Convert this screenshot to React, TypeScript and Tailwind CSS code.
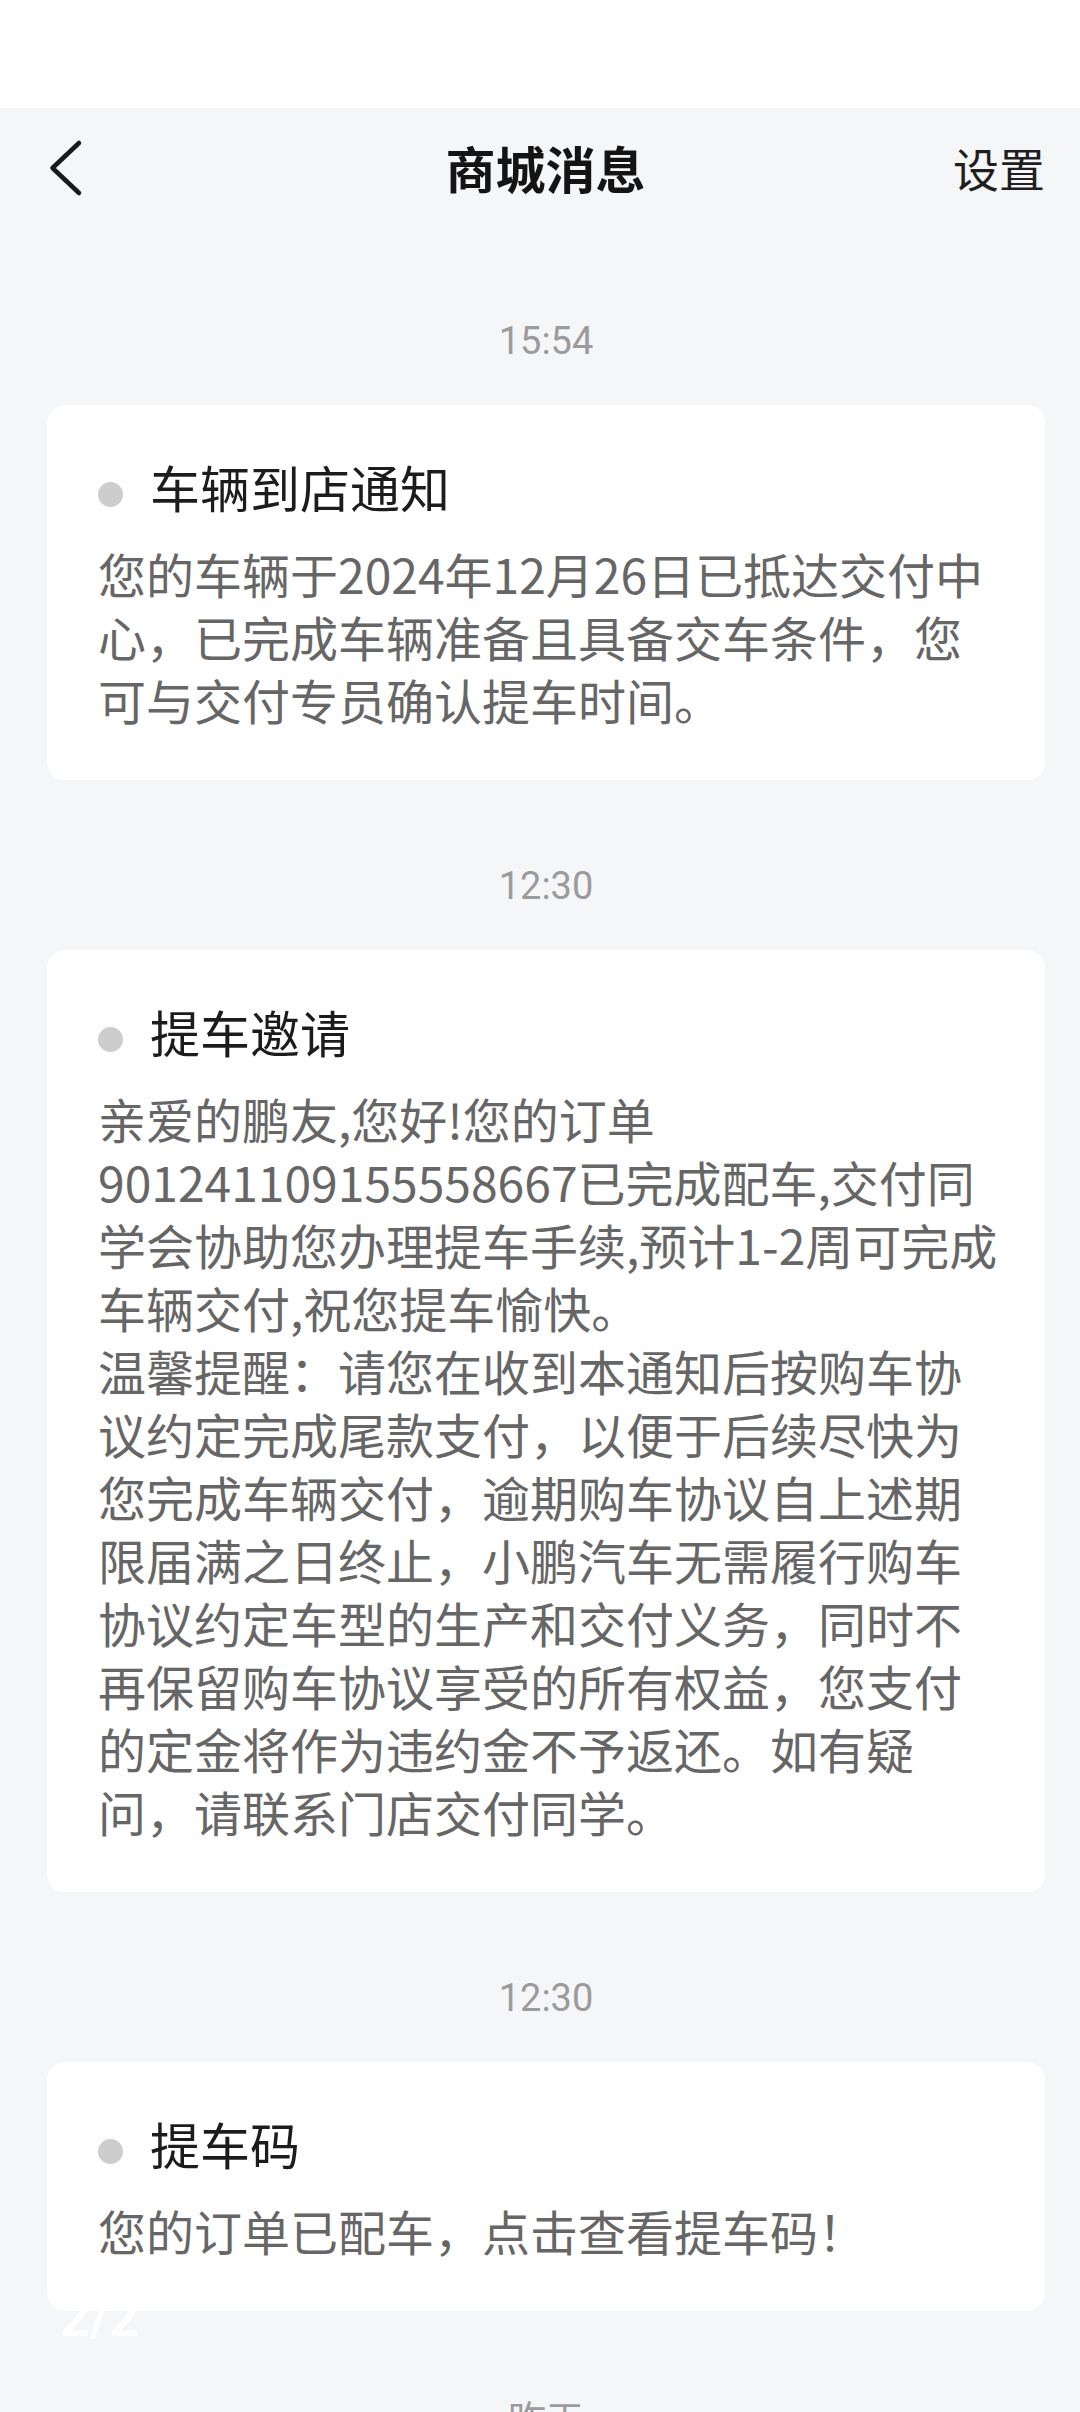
import React from "react";

const cjk = "font-['Noto_Sans_CJK_SC','Noto_Sans',sans-serif]";

type Msg = { time: string; title: string; lines: string[] };

const messages: Msg[] = [
  {
    time: "15:54",
    title: "车辆到店通知",
    lines: [
      "您的车辆于2024年12月26日已抵达交付中",
      "心，已完成车辆准备且具备交车条件，您",
      "可与交付专员确认提车时间。",
    ],
  },
  {
    time: "12:30",
    title: "提车邀请",
    lines: [
      "亲爱的鹏友,您好!您的订单",
      "901241109155558667已完成配车,交付同",
      "学会协助您办理提车手续,预计1-2周可完成",
      "车辆交付,祝您提车愉快。",
      "温馨提醒：请您在收到本通知后按购车协",
      "议约定完成尾款支付，以便于后续尽快为",
      "您完成车辆交付，逾期购车协议自上述期",
      "限届满之日终止，小鹏汽车无需履行购车",
      "协议约定车型的生产和交付义务，同时不",
      "再保留购车协议享受的所有权益，您支付",
      "的定金将作为违约金不予返还。如有疑",
      "问，请联系门店交付同学。",
    ],
  },
  {
    time: "12:30",
    title: "提车码",
    lines: ["您的订单已配车，点击查看提车码！"],
  },
];

function Card({ m }: { m: Msg }) {
  return (
    <div className="mt-[42px] rounded-[18px] bg-white pl-[51px] pr-[20px] pt-[51px] pb-[49px]">
      <div className="flex items-start">
        <div className="mt-[26px] h-[25px] w-[25px] shrink-0 rounded-full bg-[#cdcdcd]" />
        <div className={`ml-[27px] text-[50px] leading-[60px] text-[#1c1c1c] ${cjk}`}>
          {m.title}
        </div>
      </div>
      <div className={`mt-[26px] text-[48px] leading-[63px] text-[#666666] ${cjk}`}>
        {m.lines.map((l, i) => (
          <div key={i} className="whitespace-nowrap">
            {l}
          </div>
        ))}
      </div>
    </div>
  );
}

function TimeStamp({ t }: { t: string }) {
  return (
    <div
      className={`h-[44px] text-center text-[38px] leading-[44px] text-[#9b9b9b] font-['Roboto','Noto_Sans_CJK_SC',sans-serif]`}
    >
      {t}
    </div>
  );
}

export default function App() {
  return (
    <div className="relative h-[2412px] w-[1080px] overflow-hidden bg-[#f5f6f8]">
      {/* status bar */}
      <div className="h-[108px] bg-white" />

      {/* header */}
      <div className="flex h-[118px] items-center pl-[46px] pr-[35px]">
        <div className="flex w-[92px] items-center">
          <svg width="40" height="60" viewBox="0 0 40 60" fill="none">
            <path
              d="M33 6 L6.5 31 L33 56"
              stroke="#1a1a1a"
              strokeWidth="4.5"
              strokeLinecap="round"
              strokeLinejoin="round"
            />
          </svg>
        </div>
        <div
          className={`flex-1 text-center text-[50px] font-bold leading-[60px] text-[#141414] ${cjk}`}
        >
          商城消息
        </div>
        <div className={`w-[92px] text-right text-[46px] leading-[60px] text-[#1f1f1f] ${cjk}`}>
          设置
        </div>
      </div>

      {/* list */}
      <div className="flex flex-col pl-[47px] pr-[35px] pt-[93px]">
        {messages.map((m, i) => (
          <div key={i} className={i === 0 ? "" : "mt-[84px]"}>
            <TimeStamp t={m.time} />
            <Card m={m} />
          </div>
        ))}
        <div className="mt-[84px]">
          <div
            className={`h-[44px] text-center text-[38px] leading-[44px] text-[#9b9b9b] ${cjk}`}
          >
            昨天
          </div>
        </div>
      </div>

      {/* image viewer page indicator overlay */}
      <div className="absolute left-[60px] top-[2293px] font-['Roboto',sans-serif] text-[52px] font-bold leading-none text-white/90">
        2/2
      </div>
    </div>
  );
}
